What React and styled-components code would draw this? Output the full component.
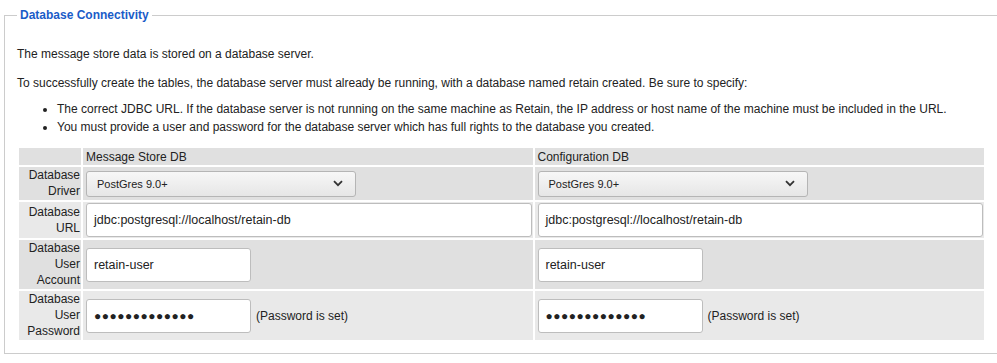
import React from "react";
import styled, { createGlobalStyle } from "styled-components";

const Global = createGlobalStyle`
  html, body { margin: 0; padding: 0; background: #ffffff; }
  body { font-family: "Liberation Sans", Arial, sans-serif; font-size: 12px; color: #222; }
`;

const Fieldset = styled.fieldset`
  box-sizing: border-box;
  margin: 8px 0 0 4px;
  width: calc(100% - 4px);
  border: 1px solid #cccccc;
  border-right: none;
  padding: 12px 11px 11px 12px;
  min-width: 0;
`;

const Legend = styled.legend`
  font-size: 12px;
  font-weight: bold;
  color: #1a5cc8;
  padding: 0 3px;
  margin-left: 0;
  line-height: 14px;
`;

const Para = styled.p`
  margin: 12px 0 ${(p) => (p.$tight ? "8px" : "12px")};
  line-height: 17px;
`;

const List = styled.ul`
  margin: 0 0 10px 0;
  padding-left: 40px;
  line-height: 18px;
`;

const Table = styled.table`
  width: 100%;
  border-collapse: separate;
  border-spacing: 2px;
`;

const HeadCell = styled.th`
  background: #e0e0e0;
  font-weight: normal;
  text-align: left;
  padding: 2px 3px 1px;
  line-height: 14px;
`;

const CornerCell = styled(HeadCell)`
  width: 56px;
`;

const Row = styled.tr`
  background: ${(p) => (p.$alt ? "#e9e9e9" : "#e0e0e0")};
`;

const Label = styled.td`
  width: 61px;
  text-align: right;
  vertical-align: middle;
  padding: 0 1px 1px 0;
  line-height: 16px;
`;

const Cell = styled.td`
  padding: 1px 1px 1px 3px;
  vertical-align: middle;
`;

const Inline = styled.div`
  display: flex;
  align-items: center;
  gap: 5px;
`;

const SelectBox = styled.div`
  box-sizing: border-box;
  width: 270px;
  height: 26px;
  border: 1px solid #b5b5b5;
  border-radius: 3px;
  background: linear-gradient(#f7f7f7, #e6e6e6);
  display: flex;
  align-items: center;
  justify-content: space-between;
  padding: 0 12px 0 10px;
  font-size: 11px;
  color: #222;
`;

const TextInput = styled.div`
  box-sizing: border-box;
  width: ${(p) => p.$w || "100%"};
  height: 34px;
  border: 1px solid #bdbdbd;
  border-radius: 3px;
  background: #ffffff;
  display: flex;
  align-items: center;
  padding: 0 7px;
  font-size: 12.5px;
  color: #222;
  white-space: nowrap;
`;

const Dots = styled.span`
  letter-spacing: 0.5px;
  font-size: 12px;
`;

const Chevron = () => (
  <svg width="10" height="7" viewBox="0 0 10 7">
    <path d="M1 1.2 L5 5.2 L9 1.2" fill="none" stroke="#333" strokeWidth="1.8" />
  </svg>
);

const Driver = () => (
  <SelectBox>
    <span>PostGres 9.0+</span>
    <Chevron />
  </SelectBox>
);

const Password = () => (
  <Inline>
    <TextInput $w="165px">
      <Dots>{"\u25CF".repeat(13)}</Dots>
    </TextInput>
    <span>(Password is set)</span>
  </Inline>
);

export default function App() {
  return (
    <>
      <Global />
      <Fieldset>
        <Legend>Database Connectivity</Legend>
        <Para>The message store data is stored on a database server.</Para>
        <Para $tight>
          To successfully create the tables, the database server must already be running, with a database
          named retain created. Be sure to specify:
        </Para>
        <List>
          <li>
            The correct JDBC URL. If the database server is not running on the same machine as Retain, the IP
            address or host name of the machine must be included in the URL.
          </li>
          <li>You must provide a user and password for the database server which has full rights to the database you created.</li>
        </List>
        <Table>
          <thead>
            <tr>
              <CornerCell></CornerCell>
              <HeadCell>Message Store DB</HeadCell>
              <HeadCell>Configuration DB</HeadCell>
            </tr>
          </thead>
          <tbody>
            <Row>
              <Label>Database Driver</Label>
              <Cell><Driver /></Cell>
              <Cell><Driver /></Cell>
            </Row>
            <Row $alt>
              <Label>Database URL</Label>
              <Cell><TextInput>jdbc:postgresql://localhost/retain-db</TextInput></Cell>
              <Cell><TextInput>jdbc:postgresql://localhost/retain-db</TextInput></Cell>
            </Row>
            <Row>
              <Label>Database User Account</Label>
              <Cell><TextInput $w="165px">retain-user</TextInput></Cell>
              <Cell><TextInput $w="165px">retain-user</TextInput></Cell>
            </Row>
            <Row $alt>
              <Label>Database User Password</Label>
              <Cell><Password /></Cell>
              <Cell><Password /></Cell>
            </Row>
          </tbody>
        </Table>
      </Fieldset>
    </>
  );
}
